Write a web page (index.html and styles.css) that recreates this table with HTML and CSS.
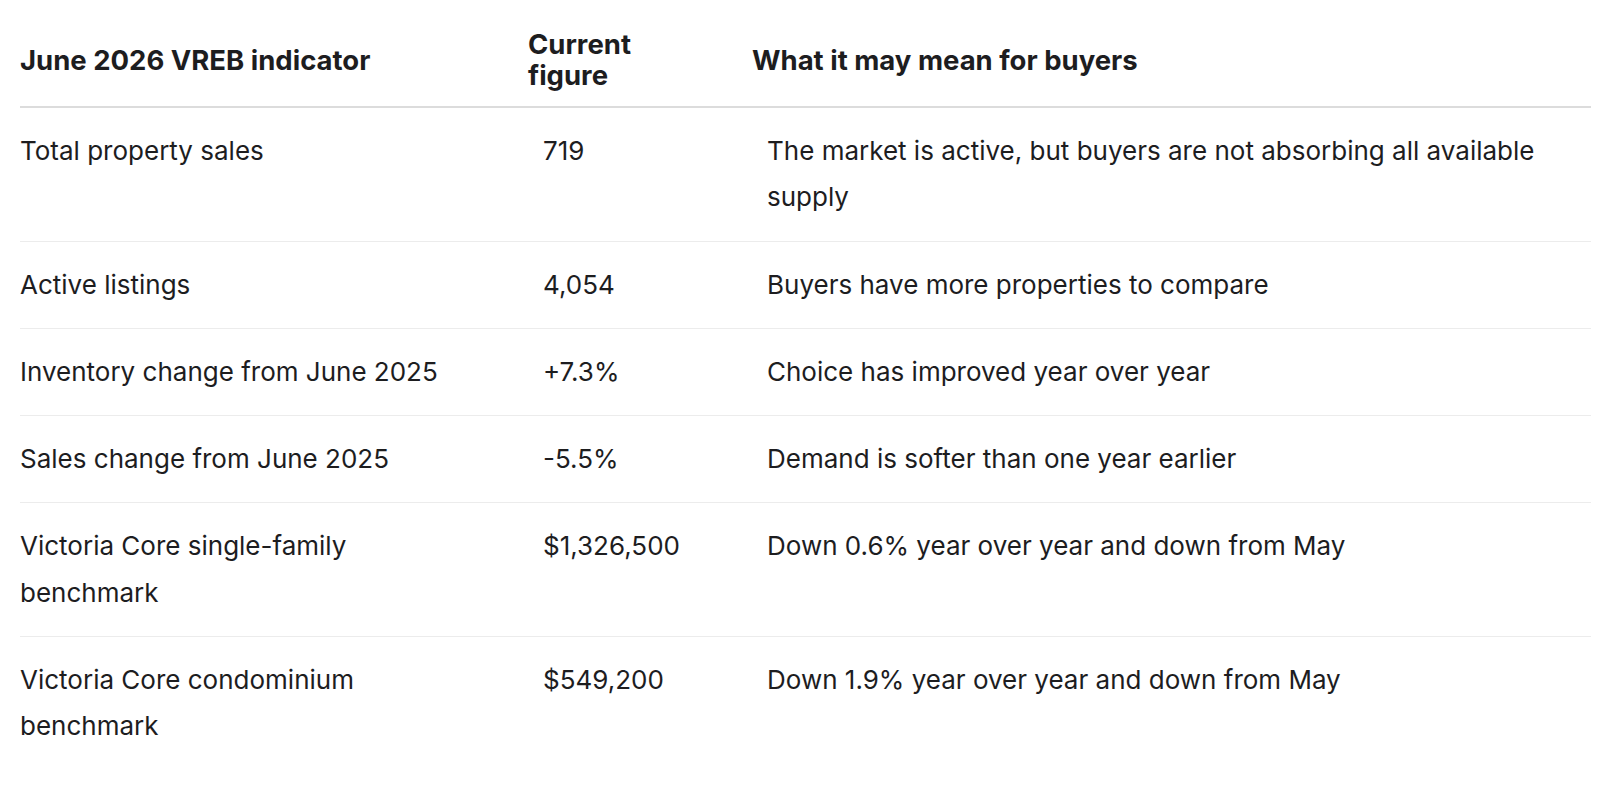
FILE: index.html
```html
<!DOCTYPE html>
<html lang="en">
<head>
<meta charset="utf-8">
<title>June 2026 VREB indicators</title>
<link rel="stylesheet" href="styles.css">
</head>
<body>
<table class="market-table">
  <colgroup>
    <col class="col-indicator">
    <col class="col-figure">
    <col class="col-meaning">
  </colgroup>
  <thead>
    <tr>
      <th>June 2026 VREB indicator</th>
      <th>Current figure</th>
      <th>What it may mean for buyers</th>
    </tr>
  </thead>
  <tbody>
    <tr>
      <td>Total property sales</td>
      <td>719</td>
      <td>The market is active, but buyers are not absorbing all available supply</td>
    </tr>
    <tr>
      <td>Active listings</td>
      <td>4,054</td>
      <td>Buyers have more properties to compare</td>
    </tr>
    <tr>
      <td>Inventory change from June 2025</td>
      <td>+7.3%</td>
      <td>Choice has improved year over year</td>
    </tr>
    <tr>
      <td>Sales change from June 2025</td>
      <td>-5.5%</td>
      <td>Demand is softer than one year earlier</td>
    </tr>
    <tr>
      <td>Victoria Core single-family benchmark</td>
      <td>$1,326,500</td>
      <td>Down 0.6% year over year and down from May</td>
    </tr>
    <tr>
      <td>Victoria Core condominium benchmark</td>
      <td>$549,200</td>
      <td>Down 1.9% year over year and down from May</td>
    </tr>
  </tbody>
</table>
</body>
</html>
```

FILE: styles.css
```css
html, body {
  margin: 0;
  background: #ffffff;
}

body {
  padding: 14px 9px 0 20px;
  font-family: Inter, "Noto Sans", "Liberation Sans", sans-serif;
  color: #1d1d1f;
}

.market-table {
  width: 1571px;
  table-layout: fixed;
  border-collapse: collapse;
  border-spacing: 0;
}

.col-indicator { width: 508px; }
.col-figure { width: 224px; }
.col-meaning { width: 839px; }

.market-table th {
  text-align: left;
  vertical-align: middle;
  font-size: 27.5px;
  font-weight: 700;
  line-height: 31px;
  padding: 15px 50px 15px 0;
  border-bottom: 2px solid #dcdcdc;
}

.market-table td {
  vertical-align: top;
  font-size: 26px;
  font-weight: 400;
  line-height: 46.3px;
  padding: 20px 48px 20px 15px;
  border-bottom: 1px solid #ececec;
}

.market-table td:first-child {
  padding-left: 0;
}

.market-table tbody tr:last-child td {
  border-bottom: none;
}
```
